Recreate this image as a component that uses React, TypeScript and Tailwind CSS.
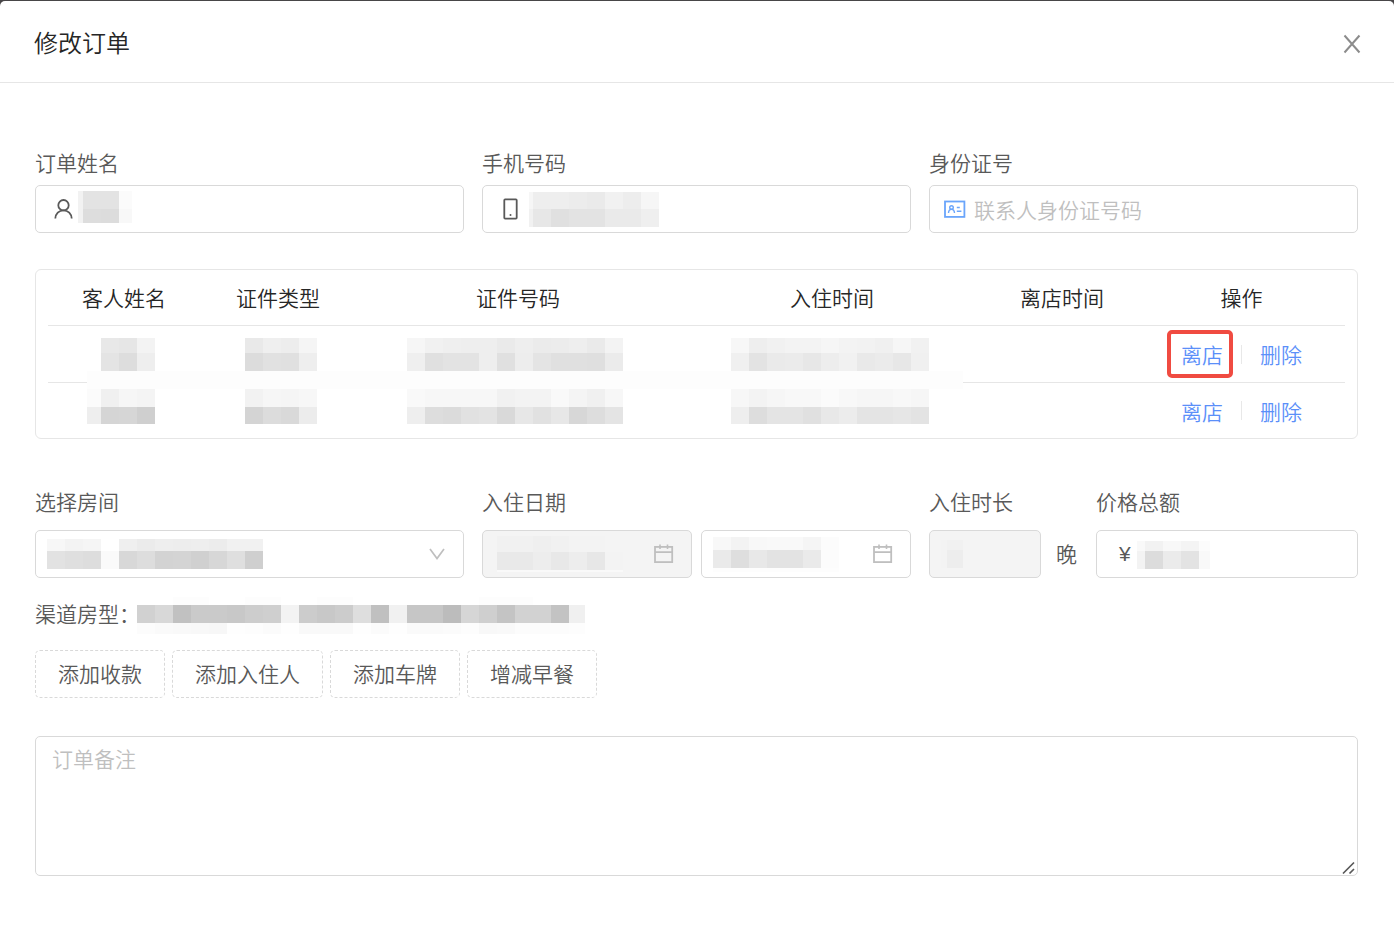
import type { ReactNode } from 'react';

type MosaicRow = [height: number, grays: string];

// Redacted value: rows of gray blocks, "--" leaves a block empty.
function Mosaic({ rows, lead = 18, tail = 18 }: { rows: MosaicRow[]; lead?: number; tail?: number }) {
  const count = rows[0][1].split(' ').length;
  const width = lead + (count - 2) * 18 + tail;
  const height = rows.reduce((sum, [h]) => sum + h, 0);
  let y = 0;

  return (
    <svg
      width={width}
      height={height}
      viewBox={`0 0 ${width} ${height}`}
      shapeRendering="crispEdges"
      className="block shrink-0"
      aria-hidden="true">
      {rows.map(([h, grays], r) => {
        const top = y;
        y += h;
        return grays.split(' ').map((g, i) =>
          g === '--' ? null : (
            <rect
              key={`${r}-${i}`}
              x={i === 0 ? 0 : lead + (i - 1) * 18}
              y={top}
              width={i === 0 ? lead : i === count - 1 ? tail : 18}
              height={h}
              fill={`#${g}${g}${g}`}
            />
          ),
        );
      })}
    </svg>
  );
}

function UserIcon() {
  return (
    <svg width="20" height="22" viewBox="0 0 20 22" fill="none" stroke="#595959" strokeWidth="1.8" className="shrink-0">
      <circle cx="10.5" cy="7.2" r="5.2" />
      <path d="M2.3 20.5c.2-4.6 3.6-8.1 8.2-8.1s8 3.5 8.2 8.1" />
    </svg>
  );
}

function MobileIcon() {
  return (
    <svg width="16" height="22" viewBox="0 0 16 22" fill="none" stroke="#595959" strokeWidth="1.8" className="shrink-0">
      <rect x="1.3" y="1.4" width="12.4" height="19.2" rx="0.8" />
      <circle cx="7.5" cy="17" r="1" fill="#595959" stroke="none" />
    </svg>
  );
}

function IdCardIcon() {
  return (
    <svg width="22" height="18" viewBox="0 0 22 18" fill="none" stroke="#6aa5fb" className="shrink-0">
      <rect x="1" y="1.5" width="19.4" height="15.4" strokeWidth="1.8" />
      <circle cx="7.5" cy="7.5" r="1.8" strokeWidth="1.4" />
      <path d="M4.5 13c.1-2.2 1.3-3.6 3-3.6s2.9 1.4 3 3.6" strokeWidth="1.4" />
      <path d="M12.8 7.5h3M12.8 11.2h4.6" strokeWidth="1.5" />
    </svg>
  );
}

function CalendarIcon() {
  return (
    <svg width="20" height="20" viewBox="0 0 20 20" fill="none" stroke="#bfbfbf" strokeWidth="1.8" className="shrink-0">
      <rect x="1" y="2.9" width="17.2" height="15.2" />
      <path d="M1 8.1h17.6M6 .5v4.6M13.5.5v4.6" strokeWidth="1.6" />
    </svg>
  );
}

function Label({ htmlFor, children }: { htmlFor: string; children: ReactNode }) {
  return (
    <label htmlFor={htmlFor} className="block leading-8">
      {children}
    </label>
  );
}

const box = 'flex h-12 items-center rounded-[5px] border border-[#d9d9d9]';
const bareInput = 'h-full min-w-0 flex-1 bg-transparent outline-none placeholder:text-[#bfbfbf]';

const guests: { name: MosaicRow[]; type: MosaicRow[]; number: MosaicRow[]; time: MosaicRow[] }[] = [
  {
    name: [
      [15, '-- e8 e6 f3'],
      [18, '-- e4 dd ee'],
    ],
    type: [
      [15, 'e9 ef ed f5'],
      [18, 'dc e1 e0 ee'],
    ],
    number: [
      [15, 'f6 f1 ef ee ee ea ee eb ec ee ea f3'],
      [18, 'ef e0 e3 e3 ee e0 ed e4 e0 e0 df eb'],
    ],
    time: [
      [15, 'f7 ee f1 f3 f3 f6 f3 f2 f0 f6 f1'],
      [18, 'f0 e3 ea eb e7 ed f1 e9 eb e7 f0'],
    ],
  },
  {
    name: [
      [18, 'fb f0 f6 f4'],
      [17, 'ee d5 d6 cf'],
    ],
    type: [
      [18, 'f2 f6 f5 f7'],
      [17, 'd4 dc d9 ec'],
    ],
    number: [
      [18, 'f9 f7 f7 f7 f7 f1 f3 f3 f9 f4 f0 f7'],
      [17, 'ee dd db e1 e3 d9 e7 e1 e7 d7 dd e4'],
    ],
    time: [
      [18, 'f7 f3 f6 f8 f8 fb f8 f6 f6 f8 f6'],
      [17, 'ee dd e4 e4 e0 e8 ec e4 e4 e6 e3'],
    ],
  },
];

function GuestTable() {
  return (
    <div className="relative mt-9 rounded-md border border-[#e6e6e6] px-3">
      <table className="w-full table-fixed border-separate border-spacing-0">
        <colgroup>
          <col className="w-[152px]" />
          <col className="w-[156px]" />
          <col className="w-[324px]" />
          <col className="w-[304px]" />
          <col className="w-[156px]" />
          <col className="w-[205px]" />
        </colgroup>
        <thead>
          <tr className="h-14 text-[#262626]">
            {['客人姓名', '证件类型', '证件号码', '入住时间', '离店时间', '操作'].map((title) => (
              <th key={title} scope="col" className="border-b border-[#e6e6e6] p-0 text-center font-[350] last:pr-0.5">
                {title}
              </th>
            ))}
          </tr>
        </thead>
        <tbody>
          {guests.map((guest, i) => (
            <tr
              key={i}
              className="h-[57px] *:border-b *:border-[#e6e6e6] last:h-[55px] last:*:border-b-0 last:[&>td:not(:last-child)]:pb-2">
              <td className="p-0 pl-[39px]">
                <Mosaic rows={guest.name} lead={14} />
              </td>
              <td className="p-0 pl-[45px]">
                <Mosaic rows={guest.type} />
              </td>
              <td className="p-0 pl-[51px]">
                <Mosaic rows={guest.number} />
              </td>
              <td className="p-0 pl-[51px]">
                <Mosaic rows={guest.time} />
              </td>
              <td className="p-0" />
              <td className="p-0 pr-0.5">
                <div className="flex items-center justify-center gap-[18px] text-[#5b8ff9]">
                  <a href="#checkout" className="relative leading-8">
                    离店
                    {i === 0 && (
                      <span className="absolute -inset-y-2 -left-3.5 -right-2.5 rounded-[5px] border-4 border-[#f04b41]" />
                    )}
                  </a>
                  <span className="h-[19px] w-px bg-[#e8e8e8]" />
                  <a href="#delete" className="leading-8">
                    删除
                  </a>
                </div>
              </td>
            </tr>
          ))}
        </tbody>
      </table>
      <div className="absolute top-[101px] left-[51px] h-[18px] w-[876px] bg-[#fdfdfd]" />
    </div>
  );
}

export default function App() {
  return (
    <div className="bg-[#484648] pt-px">
      <div
        role="dialog"
        aria-labelledby="title"
        className="min-h-screen rounded-t-[5px] bg-white font-['Noto_Sans_CJK_SC',sans-serif] text-[21px] font-[350] text-[#595959]">
        <header className="flex h-[82px] items-center justify-between border-b border-[#e6e6e6] pr-[31px] pl-[34px]">
          <h1 id="title" className="text-2xl font-[350] text-[#262626]">
            修改订单
          </h1>
          <button type="button" aria-label="关闭" className="p-0.5">
            <svg width="18" height="20" viewBox="0 0 18 20" stroke="#8c8c8c" strokeWidth="2" className="mt-1">
              <path d="M1.5 1.5l15 17M16.5 1.5l-15 17" />
            </svg>
          </button>
        </header>

        <form className="pt-[63px] pr-9 pb-12 pl-[35px]">
          <div className="grid grid-cols-3 gap-[18px]">
            <div className="flex flex-col gap-[7px]">
              <Label htmlFor="name">订单姓名</Label>
              <div className={`${box} pr-4 pl-[17px]`}>
                <UserIcon />
                <div className="pb-1 pl-[5px]">
                  <Mosaic
                    lead={5}
                    tail={13}
                    rows={[
                      [18, 'f2 e3 e3 fb'],
                      [14, 'f2 dd dc f8'],
                    ]}
                  />
                </div>
                <input id="name" className={bareInput} />
              </div>
            </div>
            <div className="flex flex-col gap-[7px]">
              <Label htmlFor="phone">手机号码</Label>
              <div className={`${box} pr-4 pl-5`}>
                <MobileIcon />
                <div className="pl-2.5">
                  <Mosaic
                    lead={4}
                    rows={[
                      [17, 'f6 ee ee ec ea f1 ed f6'],
                      [18, 'f1 e7 e0 e3 e3 ea ea ef'],
                    ]}
                  />
                </div>
                <input id="phone" type="tel" className={bareInput} />
              </div>
            </div>
            <div className="flex flex-col gap-[7px]">
              <Label htmlFor="idcard">身份证号</Label>
              <div className={`${box} gap-2 pr-4 pl-3.5`}>
                <IdCardIcon />
                <input id="idcard" placeholder="联系人身份证号码" className={bareInput} />
              </div>
            </div>
          </div>

          <GuestTable />

          <div className="mt-[46px] grid grid-cols-3 gap-[18px]">
            <div className="flex flex-col gap-[13px]">
              <Label htmlFor="room">选择房间</Label>
              <div className="grid">
                <select
                  id="room"
                  className="col-start-1 row-start-1 h-12 appearance-none rounded-[5px] border border-[#d9d9d9] bg-white px-3">
                  <option value="" />
                </select>
                <div className="pointer-events-none col-start-1 row-start-1 flex items-center justify-between pr-[19px] pl-3">
                  <Mosaic
                    rows={[
                      [12, 'f7 f3 f5 -- ef eb ee ed ee ec f1 f1'],
                      [18, 'e2 df dd fa d8 dd d3 d4 d0 d7 df cf'],
                    ]}
                  />
                  <svg width="16" height="12" viewBox="0 0 16 12" fill="none" stroke="#bfbfbf" strokeWidth="1.7">
                    <path d="M1 1l7 9.5L15 1" />
                  </svg>
                </div>
              </div>
            </div>

            <div className="flex flex-col gap-[13px]">
              <Label htmlFor="start">入住日期</Label>
              <div className="grid grid-cols-2 gap-[9px]">
                <div className={`${box} bg-[#f4f4f4] pr-[17px] pl-3.5`}>
                  <Mosaic
                    rows={[
                      [16, 'f1 f1 ef f1 f3 f3 f4'],
                      [18, 'e9 e9 ed e8 ed e7 f3'],
                      [2, 'f9 f9 f9 f9 f9 f9 f9'],
                    ]}
                  />
                  <input id="start" disabled className={bareInput} />
                  <CalendarIcon />
                </div>
                <div className={`${box} pr-[17px] pl-[11px]`}>
                  <Mosaic
                    rows={[
                      [13, 'f8 f3 f8 f9 f9 f5 fc'],
                      [18, 'ea de e8 e3 e3 ea fc'],
                      [4, 'fd fd fd fd fd fd fd'],
                    ]}
                  />
                  <input aria-label="离店日期" className={bareInput} />
                  <CalendarIcon />
                </div>
              </div>
            </div>

            <div className="flex">
              <div className="flex flex-col gap-[13px]">
                <Label htmlFor="nights">入住时长</Label>
                <div className="flex items-center gap-[15px]">
                  <div className={`${box} w-28 bg-[#f4f4f4] pl-[11px]`}>
                    <Mosaic
                      lead={6}
                      tail={16}
                      rows={[
                        [10, 'f3 f1'],
                        [18, 'f3 ed'],
                      ]}
                    />
                    <input id="nights" disabled className={bareInput} />
                  </div>
                  <span>晚</span>
                </div>
              </div>
              <div className="ml-[19px] flex min-w-0 flex-1 flex-col gap-[13px]">
                <Label htmlFor="price">价格总额</Label>
                <div className={`${box} pr-4 pl-[22px]`}>
                  <span className="font-['Liberation_Sans',sans-serif] font-normal">¥</span>
                  <div className="pt-0.5 pl-1.5">
                    <Mosaic
                      lead={8}
                      tail={11}
                      rows={[
                        [10, 'f9 f2 f8 f4 fc'],
                        [18, 'f3 dc eb e3 f9'],
                      ]}
                    />
                  </div>
                  <input id="price" className={bareInput} />
                </div>
              </div>
            </div>
          </div>

          <div className="mt-[19px] flex items-start leading-8">
            <span className="w-[102px] whitespace-nowrap">渠道房型：</span>
            <Mosaic
              tail={16}
              rows={[
                [8, '-- -- fd fd -- -- fd fd -- -- fd fd -- -- -- -- -- -- -- fd fd fd -- -- --'],
                [18, 'd1 d8 c1 ca ca c8 cd cf f3 cc c8 cc de c0 f1 c6 c6 bc d6 cf c4 d2 d2 c3 f0'],
                [11, 'fc fa f9 f8 f7 fe fd fb fe f9 f9 f9 fe fb fe fa fa fb fd f8 f9 fc fc fc fd'],
              ]}
            />
          </div>

          <div className="mt-4 flex flex-wrap gap-[7px]">
            {['添加收款', '添加入住人', '添加车牌', '增减早餐'].map((text) => (
              <button
                key={text}
                type="button"
                className="h-12 rounded-[5px] border border-dashed border-[#d9d9d9] px-[22px]">
                {text}
              </button>
            ))}
          </div>

          <div className="relative mt-[38px]">
            <textarea
              aria-label="订单备注"
              placeholder="订单备注"
              className="block h-[140px] w-full rounded-[5px] border border-[#d9d9d9] px-4 py-[5px] leading-8 outline-none placeholder:text-[#bfbfbf] [&::-webkit-resizer]:hidden"
            />
            <svg
              width="14"
              height="14"
              viewBox="0 0 14 14"
              stroke="#595959"
              strokeWidth="1.7"
              className="pointer-events-none absolute right-0.5 bottom-px"
              aria-hidden="true">
              <path d="M1 12.5L12 1.5M7.5 12.5L12 8" />
            </svg>
          </div>
        </form>
      </div>
    </div>
  );
}
